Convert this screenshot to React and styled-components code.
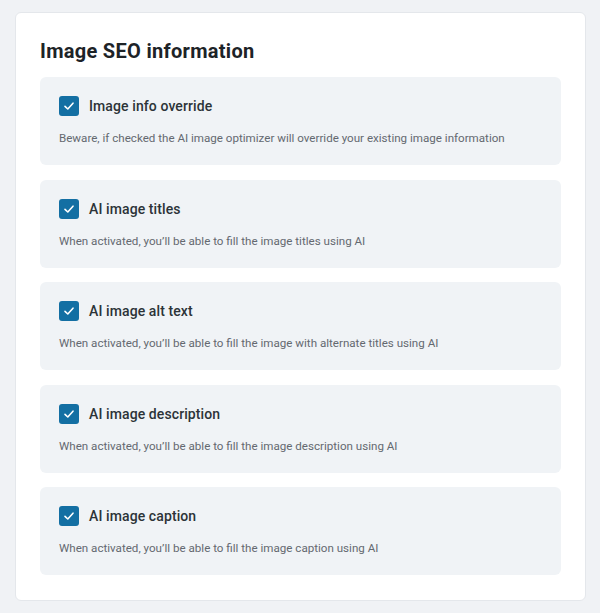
import React from 'react';
import styled, { createGlobalStyle } from 'styled-components';

const GlobalStyle = createGlobalStyle`
  html, body {
    margin: 0;
    padding: 0;
    background: #f0f2f5;
    font-family: Roboto, "Liberation Sans", Arial, sans-serif;
  }
`;

const Page = styled.div`
  padding: 12px 14px 11px 15px;
`;

const Card = styled.section`
  background: #ffffff;
  border: 1px solid #e4e7eb;
  border-radius: 6px;
  padding: 24px 24px 25px 24px;
  display: flex;
  flex-direction: column;
`;

const Title = styled.h2`
  margin: 0 0 12px;
  font-size: 20px;
  font-weight: 700;
  letter-spacing: 0.3px;
  color: #1d2327;
  line-height: 28px;
`;

const List = styled.div`
  display: flex;
  flex-direction: column;
  gap: 14.6px;
`;

const Item = styled.div`
  background: #f0f3f6;
  border-radius: 6px;
  padding: 19px 20px 20px 19px;
  height: 88px;
  box-sizing: border-box;
`;

const Row = styled.label`
  display: flex;
  align-items: center;
  gap: 10px;
  cursor: pointer;
`;

const Box = styled.span`
  width: 20px;
  height: 20px;
  border-radius: 3px;
  background: ${p => (p.$checked ? '#136fa3' : '#fff')};
  display: flex;
  align-items: center;
  justify-content: center;
  flex-shrink: 0;
`;

const Label = styled.span`
  font-size: 14px;
  font-weight: 500;
  color: #2c3338;
  letter-spacing: 0.1px;
`;

const Desc = styled.p`
  margin: 14px 0 0;
  font-size: 11.6px;
  color: #646970;
  line-height: 16px;
`;

const Check = () => (
  <svg width="12" height="12" viewBox="0 0 12 12" fill="none">
    <path d="M2 6.3 L4.8 9 L10 3.2" stroke="#fff" strokeWidth="1.6" strokeLinecap="round" strokeLinejoin="round" />
  </svg>
);

const items = [
  { title: 'Image info override', desc: 'Beware, if checked the AI image optimizer will override your existing image information' },
  { title: 'AI image titles', desc: 'When activated, you’ll be able to fill the image titles using AI' },
  { title: 'AI image alt text', desc: 'When activated, you’ll be able to fill the image with alternate titles using AI' },
  { title: 'AI image description', desc: 'When activated, you’ll be able to fill the image description using AI' },
  { title: 'AI image caption', desc: 'When activated, you’ll be able to fill the image caption using AI' },
];

export default function App() {
  return (
    <>
      <GlobalStyle />
      <Page>
        <Card>
          <Title>Image SEO information</Title>
          <List>
            {items.map(it => (
              <Item key={it.title}>
                <Row>
                  <Box $checked><Check /></Box>
                  <Label>{it.title}</Label>
                </Row>
                <Desc>{it.desc}</Desc>
              </Item>
            ))}
          </List>
        </Card>
      </Page>
    </>
  );
}
